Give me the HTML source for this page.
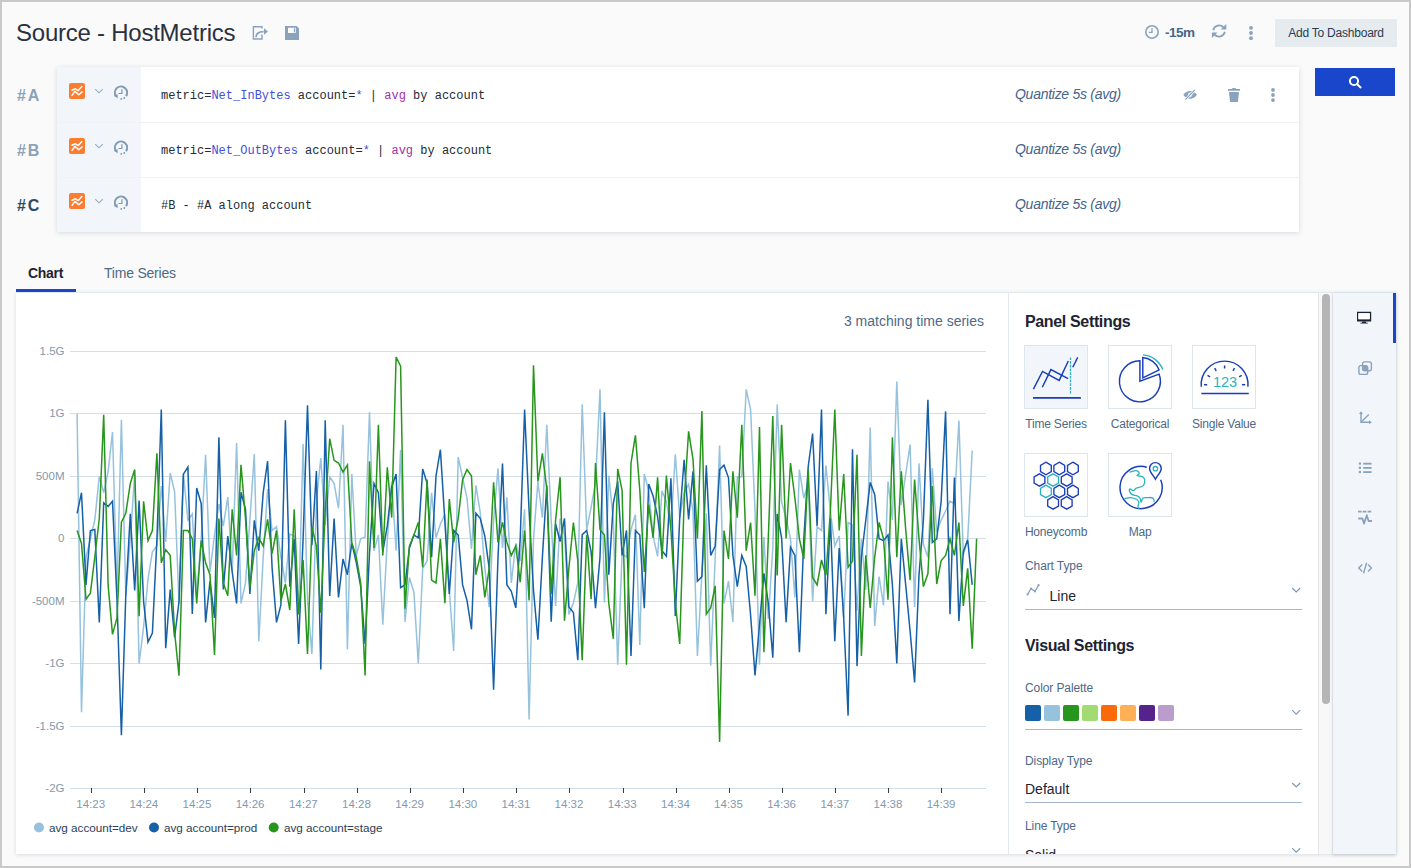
<!DOCTYPE html>
<html lang="en">
<head>
<meta charset="utf-8">
<title>Source - HostMetrics</title>
<style>
*{box-sizing:border-box;margin:0;padding:0}
html,body{width:1411px;height:868px;overflow:hidden;background:#fafafa;font-family:"Liberation Sans",sans-serif;color:#1d2a3a}
#frame{position:absolute;left:0;top:0;width:1411px;height:868px;border:2px solid #c9c9c9;border-right-width:2px;border-bottom-width:2px;pointer-events:none;z-index:50}
.abs{position:absolute}
#title{left:16px;top:18px;font-size:24px;line-height:30px;color:#2a3140;white-space:nowrap;letter-spacing:-0.24px}
.hicon{position:absolute}
#time{left:1165px;top:24.5px;font-size:13.5px;line-height:16px;font-weight:bold;color:#46678a;letter-spacing:-0.5px}
#addbtn{left:1275px;top:19px;width:122px;height:28px;background:#e6ebf0;color:#2a3b4f;font-size:12px;line-height:28px;text-align:center;white-space:nowrap;letter-spacing:-0.22px}
#searchbtn{left:1315px;top:68px;width:80px;height:28px;background:#1a46cb}
/* query panel */
#qpanel{left:57px;top:67px;width:1242px;height:165px;background:#fff;box-shadow:0 1px 5px rgba(40,60,90,.17)}
.qrow{position:absolute;left:0;width:1242px;height:55px}
.qsep{position:absolute;left:0;width:1242px;height:1px;background:#f0f3f6}
.qrow .gut{position:absolute;left:0;top:0;width:84px;height:55px;background:#f2f6fa}
.qrow .q{position:absolute;left:104px;top:20.5px;font-family:"Liberation Mono",monospace;font-size:12px;line-height:16px;color:#222b36;white-space:pre}
.q .m{color:#4250d8}.q .k{color:#a02fa8}
.qrow .qz{position:absolute;left:958px;top:18px;font-size:14px;line-height:18px;font-style:italic;color:#44648a;white-space:nowrap;letter-spacing:-0.27px}
.qlab{position:absolute;left:17px;font-size:16px;line-height:20px;font-weight:bold;color:#8ba2b8;letter-spacing:1.8px}
.oicon{position:absolute;left:12px;top:16px;width:16px;height:16px;background:#fc7c30;border-radius:2px}
/* tabs */
#tab1{left:28px;top:264px;font-size:14px;line-height:18px;font-weight:bold;color:#1d2433;letter-spacing:-0.3px}
#tab2{left:104px;top:264px;font-size:14px;line-height:18px;color:#4d6987;letter-spacing:-0.22px}
#tabline{left:16px;top:289px;width:60px;height:3px;background:#1a46cb}
#main{left:16px;top:292px;width:1380px;height:562px;background:#fff;border-top:1px solid #e3e9ef;box-shadow:0 1px 4px rgba(40,60,90,.16)}
#vdiv{left:1008px;top:293px;width:1px;height:561px;background:#e3e8ee}
#sbtrack{left:1318px;top:293px;width:15px;height:561px;background:#f8f8f8;border-left:1px solid #e4e6e8;border-right:1px solid #e9ebee}
#sbthumb{left:1322px;top:294px;width:8px;height:410px;background:#b5b5b5;border-radius:4px}
#side{left:1333px;top:293px;width:63px;height:561px;background:#f2f6fa;box-shadow:0 1px 3px rgba(40,60,90,.18)}
#sideact{left:1393px;top:293px;width:3px;height:50px;background:#1a46cb}
</style>
</head>
<body>
<div id="title" class="abs">Source - HostMetrics</div>
<div id="time" class="abs">-15m</div>
<div id="addbtn" class="abs">Add To Dashboard</div>
<div id="searchbtn" class="abs"></div>

<div class="qlab" style="top:85.8px">#A</div>
<div class="qlab" style="top:140.8px">#B</div>
<div class="qlab" style="top:195.8px;color:#2b4a68">#C</div>
<div id="qpanel" class="abs">
  <div class="qrow" style="top:0"><div class="gut"><div class="oicon"></div></div><div class="q">metric=<span class="m">Net_InBytes</span> account=<span class="m">*</span> | <span class="k">avg</span> by account</div><div class="qz">Quantize 5s (avg)</div></div>
  <div class="qrow" style="top:55px"><div class="gut"><div class="oicon"></div></div><div class="q">metric=<span class="m">Net_OutBytes</span> account=<span class="m">*</span> | <span class="k">avg</span> by account</div><div class="qz">Quantize 5s (avg)</div></div>
  <div class="qrow" style="top:110px"><div class="gut"><div class="oicon"></div></div><div class="q">#B - #A along account</div><div class="qz">Quantize 5s (avg)</div></div>
  <div class="qsep" style="top:55px"></div><div class="qsep" style="top:110px"></div>
</div>

<div id="tab1" class="abs">Chart</div>
<div id="tab2" class="abs">Time Series</div>
<div id="main" class="abs"></div>
<div id="tabline" class="abs"></div>
<div id="vdiv" class="abs"></div>
<div id="sbtrack" class="abs"></div>
<div id="sbthumb" class="abs"></div>
<div id="side" class="abs"></div>
<div id="sideact" class="abs"></div>

<!--CHART-->
<svg id="chart" class="abs" style="left:0;top:0" width="1411" height="868" viewBox="0 0 1411 868">
<g stroke="#d3dee6" stroke-width="1" shape-rendering="crispEdges">
<line x1="70" y1="351.5" x2="986" y2="351.5"/>
<line x1="70" y1="413.5" x2="986" y2="413.5"/>
<line x1="70" y1="476.5" x2="986" y2="476.5"/>
<line x1="70" y1="538.5" x2="986" y2="538.5"/>
<line x1="70" y1="601.5" x2="986" y2="601.5"/>
<line x1="70" y1="663.5" x2="986" y2="663.5"/>
<line x1="70" y1="726.5" x2="986" y2="726.5"/>
<line x1="70" y1="788.5" x2="986" y2="788.5"/>
</g>
<g stroke="#3a3a3a" stroke-width="1" shape-rendering="crispEdges">
<line x1="91.5" y1="788" x2="91.5" y2="793"/>
<line x1="144.5" y1="788" x2="144.5" y2="793"/>
<line x1="197.5" y1="788" x2="197.5" y2="793"/>
<line x1="250.5" y1="788" x2="250.5" y2="793"/>
<line x1="304.5" y1="788" x2="304.5" y2="793"/>
<line x1="357.5" y1="788" x2="357.5" y2="793"/>
<line x1="410.5" y1="788" x2="410.5" y2="793"/>
<line x1="463.5" y1="788" x2="463.5" y2="793"/>
<line x1="516.5" y1="788" x2="516.5" y2="793"/>
<line x1="569.5" y1="788" x2="569.5" y2="793"/>
<line x1="623.5" y1="788" x2="623.5" y2="793"/>
<line x1="676.5" y1="788" x2="676.5" y2="793"/>
<line x1="729.5" y1="788" x2="729.5" y2="793"/>
<line x1="782.5" y1="788" x2="782.5" y2="793"/>
<line x1="835.5" y1="788" x2="835.5" y2="793"/>
<line x1="888.5" y1="788" x2="888.5" y2="793"/>
<line x1="941.5" y1="788" x2="941.5" y2="793"/>
</g>
<g font-family="Liberation Sans, sans-serif" font-size="11.5" fill="#8499ae" text-anchor="end">
<text x="64.5" y="354.7">1.5G</text>
<text x="64.5" y="416.7">1G</text>
<text x="64.5" y="479.7">500M</text>
<text x="64.5" y="541.7">0</text>
<text x="64.5" y="604.7">-500M</text>
<text x="64.5" y="666.7">-1G</text>
<text x="64.5" y="729.7">-1.5G</text>
<text x="64.5" y="791.7">-2G</text>
</g>
<g font-family="Liberation Sans, sans-serif" font-size="11.5" fill="#8499ae" text-anchor="middle">
<text x="90.7" y="808">14:23</text>
<text x="143.8" y="808">14:24</text>
<text x="197.0" y="808">14:25</text>
<text x="250.1" y="808">14:26</text>
<text x="303.3" y="808">14:27</text>
<text x="356.4" y="808">14:28</text>
<text x="409.6" y="808">14:29</text>
<text x="462.8" y="808">14:30</text>
<text x="515.9" y="808">14:31</text>
<text x="569.0" y="808">14:32</text>
<text x="622.2" y="808">14:33</text>
<text x="675.4" y="808">14:34</text>
<text x="728.5" y="808">14:35</text>
<text x="781.6" y="808">14:36</text>
<text x="834.8" y="808">14:37</text>
<text x="888.0" y="808">14:38</text>
<text x="941.1" y="808">14:39</text>
</g>
<g fill="none" stroke-width="1.5" stroke-linejoin="miter">
<polyline stroke="#96c2dd" points="77.1,413.6 81.5,712.2 86.0,557.0 90.4,539.0 94.8,520.0 99.3,476.4 103.7,492.7 108.1,472.0 112.5,432.0 117.0,592.0 121.4,419.7 125.8,596.0 130.3,539.0 134.7,474.0 139.1,663.4 143.6,627.0 148.0,579.0 152.4,551.7 156.9,546.0 161.3,486.0 165.7,542.0 170.2,473.0 174.6,491.6 179.0,603.0 183.4,474.0 187.9,520.0 192.3,514.0 196.7,594.0 201.2,539.0 205.6,454.7 210.0,572.0 214.5,535.0 218.9,504.0 223.3,526.0 227.8,497.0 232.2,572.0 236.6,443.0 241.0,603.4 245.5,583.0 249.9,520.0 254.3,454.0 258.8,641.2 263.2,557.0 267.6,489.0 272.1,530.5 276.5,526.8 280.9,557.0 285.4,583.0 289.8,534.0 294.2,536.0 298.6,612.0 303.1,444.0 307.5,600.0 311.9,654.0 316.4,502.0 320.8,458.0 325.2,525.0 329.7,477.0 334.1,483.4 338.5,508.3 343.0,424.7 347.4,649.5 351.8,473.9 356.3,555.4 360.7,538.8 365.1,537.0 369.5,412.3 374.0,550.7 378.4,535.0 382.8,624.6 387.3,540.0 391.7,481.6 396.1,550.7 400.6,450.0 405.0,621.9 409.4,577.5 413.9,592.2 418.3,663.4 422.7,568.3 427.1,561.0 431.6,492.7 436.0,537.8 440.4,524.0 444.9,514.4 449.3,590.0 453.7,651.0 458.2,457.0 462.6,477.8 467.0,498.2 471.5,549.0 475.9,485.3 480.3,513.0 484.8,568.0 489.2,607.0 493.6,520.0 498.0,468.3 502.5,548.0 506.9,497.3 511.3,583.0 515.8,543.4 520.2,561.0 524.6,509.3 529.1,719.6 533.5,539.0 537.9,481.6 542.4,517.6 546.8,424.7 551.2,520.0 555.6,606.0 560.1,518.5 564.5,535.0 568.9,614.4 573.4,603.0 577.8,583.0 582.2,404.4 586.7,529.5 591.1,507.4 595.5,483.0 600.0,389.3 604.4,602.5 608.8,475.6 613.3,520.0 617.7,664.7 622.1,553.5 626.5,557.0 631.0,529.5 635.4,514.8 639.8,645.0 644.3,474.0 648.7,490.7 653.1,536.0 657.6,556.3 662.0,490.7 666.4,501.9 670.9,527.7 675.3,454.2 679.7,517.6 684.1,492.7 688.6,484.2 693.0,511.0 697.4,656.0 701.9,574.0 706.3,513.3 710.7,665.8 715.2,557.0 719.6,445.5 724.0,603.4 728.5,581.2 732.9,621.9 737.3,476.8 741.8,476.8 746.2,389.3 750.6,409.5 755.0,511.0 759.5,664.7 763.9,537.0 768.3,619.0 772.8,548.0 777.2,404.4 781.6,502.0 786.1,518.5 790.5,538.8 794.9,597.4 799.4,469.5 803.8,498.2 808.2,483.0 812.6,601.3 817.1,526.8 821.5,530.5 825.9,465.2 830.4,511.0 834.8,546.1 839.2,536.0 843.7,618.2 848.1,522.5 852.5,525.0 857.0,610.8 861.4,539.0 865.8,590.0 870.2,427.4 874.7,626.0 879.1,576.6 883.5,605.3 888.0,481.5 892.4,520.0 896.8,381.5 901.3,505.0 905.7,474.0 910.1,444.6 914.6,607.0 919.0,463.4 923.4,544.3 927.9,557.2 932.3,468.2 936.7,532.3 941.1,520.3 945.6,511.0 950.0,501.0 954.4,503.7 958.9,420.6 963.3,555.4 967.7,538.8 972.2,450.5"/>
<polyline stroke="#1560a6" points="77.1,513.3 81.5,492.7 86.0,585.0 90.4,530.5 94.8,529.5 99.3,622.4 103.7,502.8 108.1,506.5 112.5,501.3 117.0,600.0 121.4,735.3 125.8,595.0 130.3,513.9 134.7,590.5 139.1,500.5 143.6,601.5 148.0,642.0 152.4,633.0 156.9,540.0 161.3,409.5 165.7,648.2 170.2,589.6 174.6,637.5 179.0,601.6 183.4,474.2 187.9,467.0 192.3,614.0 196.7,488.0 201.2,503.7 205.6,622.4 210.0,581.2 214.5,618.0 218.9,437.2 223.3,589.5 227.8,536.0 232.2,572.0 236.6,603.4 241.0,492.3 245.5,509.3 249.9,594.0 254.3,520.3 258.8,550.7 263.2,492.7 267.6,461.2 272.1,568.0 276.5,622.4 280.9,605.0 285.4,420.2 289.8,586.7 294.2,539.0 298.6,644.0 303.1,539.0 307.5,405.3 311.9,545.2 316.4,471.0 320.8,669.5 325.2,420.2 329.7,596.0 334.1,518.5 338.5,597.4 343.0,559.0 347.4,574.7 351.8,543.4 356.3,562.7 360.7,586.7 365.1,644.0 369.5,553.5 374.0,483.4 378.4,492.7 382.8,551.7 387.3,525.9 391.7,487.0 396.1,474.0 400.6,587.6 405.0,584.9 409.4,548.0 413.9,535.0 418.3,537.8 422.7,469.0 427.1,483.4 431.6,557.2 436.0,476.0 440.4,449.7 444.9,522.0 449.3,594.0 453.7,530.5 458.2,535.0 462.6,584.9 467.0,600.5 471.5,629.3 475.9,513.3 480.3,518.5 484.8,536.0 489.2,568.3 493.6,689.7 498.0,557.2 502.5,463.6 506.9,584.9 511.3,591.3 515.8,607.9 520.2,538.8 524.6,409.5 529.1,511.0 533.5,590.4 537.9,639.8 542.4,557.0 546.8,485.3 551.2,621.7 555.6,524.0 560.1,541.5 564.5,518.5 568.9,607.0 573.4,612.5 577.8,660.2 582.2,534.7 586.7,530.5 591.1,551.7 595.5,608.3 600.0,557.2 604.4,412.3 608.8,574.7 613.3,503.7 617.7,481.5 622.1,555.4 626.5,530.5 631.0,656.0 635.4,530.5 639.8,535.0 644.3,608.3 648.7,484.0 653.1,496.0 657.6,516.6 662.0,550.7 666.4,556.3 670.9,478.2 675.3,616.1 679.7,518.5 684.1,459.7 688.6,519.4 693.0,471.4 697.4,581.2 701.9,576.6 706.3,465.2 710.7,555.4 715.2,546.1 719.6,469.5 724.0,465.2 728.5,477.8 732.9,555.4 737.3,586.7 741.8,555.4 746.2,566.4 750.6,615.0 755.0,675.4 759.5,625.0 763.9,573.4 768.3,603.0 772.8,657.8 777.2,513.9 781.6,537.8 786.1,622.3 790.5,547.1 794.9,555.4 799.4,652.3 803.8,539.0 808.2,466.7 812.6,433.5 817.1,525.9 821.5,409.5 825.9,614.2 830.4,518.5 834.8,641.2 839.2,548.0 843.7,618.0 848.1,715.6 852.5,449.2 857.0,666.1 861.4,557.0 865.8,520.0 870.2,482.4 874.7,494.4 879.1,538.8 883.5,540.6 888.0,535.0 892.4,585.0 896.8,663.4 901.3,538.8 905.7,585.0 910.1,631.0 914.6,682.4 919.0,575.0 923.4,520.0 927.9,399.8 932.3,542.4 936.7,538.8 941.1,502.0 945.6,411.4 950.0,614.2 954.4,477.4 958.9,620.9 963.3,551.7 967.7,539.7 972.2,584.9"/>
<polyline stroke="#27961c" points="77.1,530.5 81.5,543.4 86.0,599.2 90.4,593.2 94.8,557.0 99.3,518.5 103.7,414.7 108.1,584.9 112.5,634.4 117.0,618.0 121.4,522.2 125.8,513.3 130.3,483.4 134.7,469.6 139.1,616.3 143.6,501.3 148.0,540.6 152.4,530.5 156.9,453.4 161.3,562.7 165.7,549.8 170.2,555.4 174.6,632.0 179.0,675.7 183.4,530.5 187.9,530.5 192.3,538.8 196.7,603.4 201.2,540.6 205.6,562.7 210.0,574.7 214.5,655.0 218.9,518.5 223.3,583.0 227.8,595.7 232.2,509.3 236.6,555.4 241.0,464.9 245.5,518.5 249.9,587.6 254.3,550.7 258.8,537.8 263.2,546.1 267.6,519.4 272.1,553.5 276.5,530.5 280.9,600.7 285.4,584.0 289.8,610.0 294.2,509.3 298.6,614.5 303.1,560.0 307.5,654.0 311.9,526.8 316.4,546.1 320.8,612.7 325.2,511.0 329.7,438.7 334.1,460.3 338.5,463.0 343.0,472.2 347.4,464.9 351.8,542.4 356.3,557.2 360.7,583.0 365.1,675.4 369.5,461.2 374.0,548.0 378.4,424.7 382.8,555.4 387.3,467.3 391.7,517.6 396.1,357.0 400.6,366.2 405.0,608.8 409.4,546.1 413.9,535.0 418.3,522.5 422.7,567.3 427.1,479.6 431.6,580.2 436.0,583.0 440.4,538.8 444.9,603.3 449.3,499.1 453.7,542.4 458.2,518.5 462.6,479.6 467.0,469.5 471.5,476.0 475.9,574.7 480.3,555.4 484.8,597.4 489.2,568.3 493.6,482.4 498.0,542.4 502.5,522.5 506.9,542.4 511.3,555.4 515.8,546.1 520.2,582.1 524.6,530.5 529.1,600.5 533.5,365.3 537.9,481.5 542.4,453.4 546.8,489.0 551.2,594.0 555.6,520.0 560.1,477.2 564.5,620.8 568.9,568.0 573.4,522.5 577.8,560.9 582.2,660.2 586.7,535.0 591.1,599.2 595.5,463.0 600.0,529.5 604.4,535.0 608.8,603.4 613.3,638.8 617.7,468.9 622.1,490.4 626.5,664.7 631.0,463.0 635.4,435.4 639.8,490.0 644.3,572.0 648.7,504.6 653.1,537.8 657.6,477.2 662.0,559.0 666.4,475.5 670.9,529.5 675.3,602.0 679.7,644.0 684.1,502.0 688.6,431.3 693.0,459.3 697.4,538.4 701.9,411.0 706.3,614.2 710.7,608.0 715.2,585.8 719.6,742.1 724.0,530.5 728.5,559.0 732.9,471.4 737.3,517.6 741.8,424.7 746.2,550.7 750.6,522.5 755.0,595.8 759.5,427.0 763.9,652.3 768.3,538.0 772.8,416.0 777.2,575.6 781.6,424.7 786.1,538.4 790.5,463.0 794.9,498.0 799.4,538.8 803.8,559.0 808.2,469.5 812.6,577.5 817.1,584.9 821.5,560.0 825.9,575.3 830.4,511.0 834.8,409.5 839.2,530.5 843.7,474.0 848.1,567.3 852.5,560.9 857.0,454.7 861.4,656.0 865.8,555.4 870.2,608.0 874.7,557.0 879.1,522.5 883.5,538.8 888.0,599.7 892.4,437.2 896.8,557.2 901.3,471.3 905.7,529.5 910.1,580.2 914.6,479.6 919.0,538.8 923.4,586.6 927.9,573.8 932.3,486.0 936.7,584.0 941.1,560.9 945.6,555.4 950.0,538.8 954.4,555.4 958.9,522.5 963.3,605.9 967.7,568.3 972.2,648.6 976.6,538.8"/>
</g>
<circle cx="39" cy="827.5" r="5" fill="#96c2dd"/><circle cx="154" cy="827.5" r="5" fill="#1560a6"/><circle cx="273.7" cy="827.5" r="5" fill="#27961c"/>
<g font-family="Liberation Sans, sans-serif" font-size="11.7" fill="#2c3e55">
<text x="49" y="831.5">avg account=dev</text><text x="164" y="831.5">avg account=prod</text><text x="284" y="831.5">avg account=stage</text>
</g>
<text x="984" y="326" text-anchor="end" font-family="Liberation Sans, sans-serif" font-size="14" fill="#4d6987">3 matching time series</text>
</svg>
<!--/CHART-->
<!--ICONS-->
<svg id="icons" class="abs" style="left:0;top:0" width="1411" height="868" viewBox="0 0 1411 868">
<g fill="none" stroke="#8aa2bc" stroke-width="1.4">
<path d="M262 28.6V26.8H253.4V39H262V34.4"/>
<path d="M256 37.2C256 33.4 258.6 31.6 263.6 31.6" stroke-width="1.8"/>
</g>
<path d="M264 28.2L268 31.5L264 34.8Z" fill="#8aa2bc"/>
<path d="M285 26.1H296.6L299 28.5V40H285Z M288 27.8V33H295.8V27.8Z" fill="#8aa2bc" fill-rule="evenodd"/>
<rect x="293.9" y="28.4" width="1.1" height="4" fill="#8aa2bc"/>
<g fill="none" stroke="#8aa2bc" stroke-width="1.6"><circle cx="1152" cy="32" r="6.2"/><path d="M1152 28V32.4H1148.8" stroke-width="1.3"/></g>
<g fill="none" stroke="#8aa2bc" stroke-width="1.8">
<path d="M1213.3 30.2A6 6 0 0 1 1223.6 27.4"/>
<path d="M1224.9 31.8A6 6 0 0 1 1214.6 34.6"/>
</g>
<path d="M1226.3 24V29.6H1220.7Z" fill="#8aa2bc"/><path d="M1211.9 38V32.4H1217.5Z" fill="#8aa2bc"/>
<circle cx="1251" cy="27.8" r="1.9" fill="#8aa2bc"/>
<circle cx="1251" cy="33" r="1.9" fill="#8aa2bc"/>
<circle cx="1251" cy="38.2" r="1.9" fill="#8aa2bc"/>
<g fill="none" stroke="#fff" stroke-width="2" stroke-linecap="round"><circle cx="1354" cy="81" r="4.1"/><path d="M1357.2 84.2L1360.6 87.4"/></g>
<path d="M1183.3 94.8C1186.5 89.6 1193.7 89.6 1196.9 94.8C1193.7 100 1186.5 100 1183.3 94.8Z" fill="#8aa2bc"/>
<circle cx="1190.1" cy="94.8" r="2.3" fill="#fff" opacity=".75"/>
<circle cx="1190.1" cy="94.8" r="1.1" fill="#8aa2bc"/>
<path d="M1185 100.2L1194.2 90.6" stroke="#fff" stroke-width="2.6" fill="none"/>
<path d="M1185.4 99.6L1194.7 90" stroke="#8aa2bc" stroke-width="1.1" fill="none"/>
<path d="M1228 89.1H1232.3V88H1235.8V89.1H1240V90.8H1228Z M1228.9 92.1H1239L1237.9 101.9H1230.1Z" fill="#8aa2bc"/>
<circle cx="1273" cy="89.9" r="1.9" fill="#8aa2bc"/>
<circle cx="1273" cy="95" r="1.9" fill="#8aa2bc"/>
<circle cx="1273" cy="100.1" r="1.9" fill="#8aa2bc"/>
<g transform="translate(69,83)" fill="none" stroke="#fff" stroke-width="1.5" stroke-linejoin="round" stroke-linecap="round">
<path d="M2.9 7.3L6.4 5.8L9.2 7.6L12.9 3.6"/><path d="M3 12.4L5.9 8.4L9.8 11.8L13.1 8.9"/>
</g>
<path d="M95.2 89.2L99 92.8L102.8 89.2" fill="none" stroke="#95aabf" stroke-width="1.15"/>
<path d="M126.00 96.10A6.1 6.1 0 1 0 115.72 95.65" fill="none" stroke="#8099b3" stroke-width="2"/>
<path d="M113.7 95.8L117.7 98.2L117.6 94.2Z" fill="#8099b3"/>
<path d="M121.9 89.2V93.5H118.4" fill="none" stroke="#8099b3" stroke-width="1.2"/>
<circle cx="121.3" cy="98.9" r="0.9" fill="#8099b3"/><circle cx="124.3" cy="98.0" r="0.9" fill="#8099b3"/>
<g transform="translate(69,138)" fill="none" stroke="#fff" stroke-width="1.5" stroke-linejoin="round" stroke-linecap="round">
<path d="M2.9 7.3L6.4 5.8L9.2 7.6L12.9 3.6"/><path d="M3 12.4L5.9 8.4L9.8 11.8L13.1 8.9"/>
</g>
<path d="M95.2 144.2L99 147.8L102.8 144.2" fill="none" stroke="#95aabf" stroke-width="1.15"/>
<path d="M126.00 151.10A6.1 6.1 0 1 0 115.72 150.65" fill="none" stroke="#8099b3" stroke-width="2"/>
<path d="M113.7 150.8L117.7 153.2L117.6 149.2Z" fill="#8099b3"/>
<path d="M121.9 144.2V148.5H118.4" fill="none" stroke="#8099b3" stroke-width="1.2"/>
<circle cx="121.3" cy="153.9" r="0.9" fill="#8099b3"/><circle cx="124.3" cy="153.0" r="0.9" fill="#8099b3"/>
<g transform="translate(69,193)" fill="none" stroke="#fff" stroke-width="1.5" stroke-linejoin="round" stroke-linecap="round">
<path d="M2.9 7.3L6.4 5.8L9.2 7.6L12.9 3.6"/><path d="M3 12.4L5.9 8.4L9.8 11.8L13.1 8.9"/>
</g>
<path d="M95.2 199.2L99 202.8L102.8 199.2" fill="none" stroke="#95aabf" stroke-width="1.15"/>
<path d="M126.00 206.10A6.1 6.1 0 1 0 115.72 205.65" fill="none" stroke="#8099b3" stroke-width="2"/>
<path d="M113.7 205.8L117.7 208.2L117.6 204.2Z" fill="#8099b3"/>
<path d="M121.9 199.2V203.5H118.4" fill="none" stroke="#8099b3" stroke-width="1.2"/>
<circle cx="121.3" cy="208.9" r="0.9" fill="#8099b3"/><circle cx="124.3" cy="208.0" r="0.9" fill="#8099b3"/>
<path d="M1357 311.8H1371.2V321.6H1357Z M1358.4 313.2V319.2H1369.8V313.2Z" fill="#1d2433" fill-rule="evenodd"/>
<rect x="1358.4" y="313.2" width="11.4" height="6" fill="#fff"/>
<path d="M1362.4 321.6H1365.8L1366.2 322.7H1367.8V323.6H1360.4V322.7H1362Z" fill="#1d2433"/>
<g fill="none" stroke="#8aa2bc" stroke-width="1.4"><rect x="1362.6" y="361.9" width="8.8" height="8.8" rx="2"/><rect x="1358.9" y="365.6" width="8.8" height="8.8" rx="2"/></g>
<rect x="1363" y="366" width="4.4" height="4.4" fill="#8aa2bc"/>
<g fill="none" stroke="#8aa2bc" stroke-width="1.4"><path d="M1361 413V422.2H1370"/><path d="M1361 422.2L1368.8 414.6"/></g>
<path d="M1359 414L1361 411.2L1363 414Z" fill="#8aa2bc"/><path d="M1369 420.2L1371.8 422.2L1369 424.2Z" fill="#8aa2bc"/>
<rect x="1363.2" y="462.8" width="8.4" height="1.8" fill="#8aa2bc"/><rect x="1358.8" y="462.5" width="2.2" height="2.2" fill="#8aa2bc"/>
<rect x="1363.2" y="467.0" width="8.4" height="1.8" fill="#8aa2bc"/><rect x="1358.8" y="466.7" width="2.2" height="2.2" fill="#8aa2bc"/>
<rect x="1363.2" y="471.2" width="8.4" height="1.8" fill="#8aa2bc"/><rect x="1358.8" y="470.9" width="2.2" height="2.2" fill="#8aa2bc"/>
<path d="M1358 511.6H1372" stroke="#8aa2bc" stroke-width="1.7" stroke-dasharray="3.6 1.2" fill="none"/>
<path d="M1358.2 518.5H1362.4L1364 523.6L1366.8 515.2L1368.6 521H1372" stroke="#8aa2bc" stroke-width="1.8" fill="none" stroke-linejoin="round"/>
<g fill="none" stroke="#8aa2bc" stroke-width="1.4"><path d="M1362.2 564.6L1358.8 568L1362.2 571.4"/><path d="M1368 564.6L1371.4 568L1368 571.4"/><path d="M1366.6 562.8L1363.6 573.2"/></g>
</svg>
<!--/ICONS-->
<!--SETTINGS-->
<style>
.sh{position:absolute;left:1025px;font-size:16px;line-height:20px;font-weight:bold;color:#1d2433;white-space:nowrap;letter-spacing:-0.35px}
.sl{position:absolute;left:1025px;font-size:12px;line-height:14px;color:#4d6987;white-space:nowrap;letter-spacing:-0.1px}
.sv{position:absolute;left:1025px;font-size:14px;line-height:18px;color:#1d2433;white-space:nowrap}
.ul{position:absolute;left:1025px;width:277px;height:1px;background:#a3b8d0}
.tile{position:absolute;width:64px;height:64px;border:1px solid #dde5ed;background:#fff}
.tl{position:absolute;width:104px;text-align:center;font-size:12px;line-height:14px;color:#4d6987;white-space:nowrap;letter-spacing:-0.2px}
.sw{position:absolute;top:705px;width:16px;height:16px;border-radius:2px}
</style>
<div class="sh" style="top:312px">Panel Settings</div>
<div class="tile" style="left:1024px;top:345px;background:#f2f6fa"></div>
<div class="tl" style="left:1004px;top:417px">Time Series</div>
<div class="tile" style="left:1108px;top:345px"></div>
<div class="tl" style="left:1088px;top:417px">Categorical</div>
<div class="tile" style="left:1192px;top:345px"></div>
<div class="tl" style="left:1172px;top:417px">Single Value</div>
<div class="tile" style="left:1024px;top:453px"></div>
<div class="tl" style="left:1004px;top:525px">Honeycomb</div>
<div class="tile" style="left:1108px;top:453px"></div>
<div class="tl" style="left:1088px;top:525px">Map</div>
<div class="sl" style="top:559px">Chart Type</div>
<div class="sv" style="top:587px;left:1049.5px">Line</div>
<div class="ul" style="top:609px"></div>
<div class="sh" style="top:636px">Visual Settings</div>
<div class="sl" style="top:681px">Color Palette</div>
<div class="sw" style="left:1025px;background:#1560a6"></div>
<div class="sw" style="left:1044px;background:#96c2dd"></div>
<div class="sw" style="left:1063px;background:#27961c"></div>
<div class="sw" style="left:1082px;background:#a2db72"></div>
<div class="sw" style="left:1101px;background:#fb690a"></div>
<div class="sw" style="left:1120px;background:#feb056"></div>
<div class="sw" style="left:1139px;background:#56228b"></div>
<div class="sw" style="left:1158px;background:#ba9dcc"></div>
<div class="ul" style="top:729px"></div>
<div class="sl" style="top:754px">Display Type</div>
<div class="sv" style="top:780px">Default</div>
<div class="ul" style="top:802px"></div>
<div class="sl" style="top:819px">Line Type</div>
<div class="abs" style="left:1025px;top:845px;width:200px;height:9px;overflow:hidden"><div class="sv" style="left:0;top:0.5px">Solid</div></div>
<svg class="abs" style="left:0;top:0" width="1411" height="868" viewBox="0 0 1411 868">
<path d="M1292.2 588L1296.2 592L1300.2 588" fill="none" stroke="#7f97b0" stroke-width="1.1"/>
<path d="M1292.2 710.2L1296.2 714.2L1300.2 710.2" fill="none" stroke="#7f97b0" stroke-width="1.1"/>
<path d="M1292.2 783L1296.2 787L1300.2 783" fill="none" stroke="#7f97b0" stroke-width="1.1"/>
<path d="M1292.2 848.2L1296.2 852.2L1300.2 848.2" fill="none" stroke="#7f97b0" stroke-width="1.1"/>
<g fill="none" stroke="#8aa2bc" stroke-width="1.3"><path d="M1027.6 594.4L1031 588.6L1035 591.4L1038.6 585.2"/></g>
<circle cx="1027.6" cy="594.4" r="1.1" fill="#8aa2bc"/>
<circle cx="1031" cy="588.6" r="1.1" fill="#8aa2bc"/>
<circle cx="1035" cy="591.4" r="1.1" fill="#8aa2bc"/>
<circle cx="1038.6" cy="585.2" r="1.1" fill="#8aa2bc"/>
<g transform="translate(1024,345)" fill="none" stroke="#1a3dbb" stroke-width="1.45">
<path d="M9.4 44.2L18.5 26.4L35.2 35.4L44.3 16"/>
<path d="M18.3 42.2L26.9 24.6L44.1 33.7"/><path d="M48.8 22.2L53.7 12.4"/>
<path d="M9 52.9H56.9" stroke-width="1.9"/>
<path d="M46.5 12.4V48.6" stroke="#2bb3c0" stroke-dasharray="2.7 1" stroke-width="1.3"/>
</g>
<g transform="translate(1108,345)" fill="none" stroke="#1a3dbb" stroke-width="1.45">
<path d="M31.9 15.8V36.3L51.1 29.1A20.5 20.5 0 1 1 31.9 15.8Z"/>
<path d="M34.8 12.5V32.8L51.1 25.0A19.4 19.4 0 0 0 34.8 12.5Z"/>
<path d="M35.0 9.9A22.6 22.6 0 0 1 54.8 24.6" stroke="#2bb3c0"/>
</g>
<g transform="translate(1192,345)" fill="none" stroke="#1a3dbb" stroke-width="1.45">
<path d="M9.3 41.7A23.4 23.4 0 1 1 55.9 41.7"/><path d="M9.3 48.5H56.8" stroke-width="1.7"/>
<path d="M15.2 39.7L12.0 39.7" stroke-width="1.5"/>
<path d="M18.1 31.9L15.5 30.4" stroke-width="1.5"/>
<path d="M24.2 25.8L22.7 23.2" stroke-width="1.5"/>
<path d="M32.6 23.5L32.6 20.5" stroke-width="1.5"/>
<path d="M41.0 25.8L42.5 23.2" stroke-width="1.5"/>
<path d="M47.1 31.9L49.7 30.4" stroke-width="1.5"/>
<path d="M50.0 39.7L53.2 39.7" stroke-width="1.5"/>
</g>
<text x="1225.1" y="386.5" text-anchor="middle" font-family="Liberation Sans, sans-serif" font-size="14.5" fill="#2bb3c0">123</text>
<g transform="translate(1024,453)" fill="none" stroke="#1a3dbb" stroke-width="1.35">
<polygon points="21.9,9.2 27.3,12.4 27.3,18.6 21.9,21.8 16.5,18.6 16.5,12.4"/>
<polygon points="35.3,9.2 40.7,12.4 40.7,18.6 35.3,21.8 29.9,18.6 29.9,12.4"/>
<polygon points="48.9,9.2 54.3,12.4 54.3,18.6 48.9,21.8 43.5,18.6 43.5,12.4"/>
<polygon points="15.5,20.8 20.9,23.9 20.9,30.1 15.5,33.2 10.1,30.1 10.1,23.9"/>
<polygon points="29.1,20.8 34.5,23.9 34.5,30.1 29.1,33.2 23.7,30.1 23.7,23.9" stroke="#2bb3c0"/>
<polygon points="42.7,20.8 48.1,23.9 48.1,30.1 42.7,33.2 37.3,30.1 37.3,23.9"/>
<polygon points="21.9,32.1 27.3,35.3 27.3,41.5 21.9,44.6 16.5,41.5 16.5,35.3" stroke="#2bb3c0"/>
<polygon points="35.3,32.1 40.7,35.3 40.7,41.5 35.3,44.6 29.9,41.5 29.9,35.3"/>
<polygon points="48.9,32.1 54.3,35.3 54.3,41.5 48.9,44.6 43.5,41.5 43.5,35.3"/>
<polygon points="29.1,43.6 34.5,46.8 34.5,53.0 29.1,56.1 23.7,53.0 23.7,46.8"/>
<polygon points="42.7,43.6 48.1,46.8 48.1,53.0 42.7,56.1 37.3,53.0 37.3,46.8"/>
</g>
<g transform="translate(1108,453)" fill="none" stroke="#1a3dbb" stroke-width="1.45">
<path d="M52.7 26.7A21.1 21.1 0 1 1 38.8 14.2"/>
<path d="M47.4 26.2C45.4 22.4 41.6 19.2 41.6 15.4A5.8 5.8 0 0 1 53.2 15.4C53.2 19.2 49.4 22.4 47.4 26.2Z"/>
<circle cx="47.4" cy="15.7" r="2.2" stroke="#2bb3c0" stroke-width="1.3"/>
<g stroke="#2bb3c0" stroke-width="1.3" stroke-linejoin="round" transform="translate(0.6,0.4)">
<path d="M20.9 18.6C23.4 18.4 26 16.4 28.5 17.4C30.6 18.2 31 20.2 30.2 20.9C29.6 21.6 28.4 21.6 28.5 22.1C30 23 32 22.4 33.7 23.2C35 23.8 35.8 25 36 26.2C36.4 28.2 36 30.4 34.9 32C33 34 29.6 33.6 27.3 34.9C26.2 35.6 26 36.8 25 37.2C23.6 37.6 22.6 35.4 21.5 35.4C20.6 35.6 20.6 36.8 20.9 37.8C21.4 39.4 22.4 40.6 23.8 41.3C25.2 42 27 41.8 28.5 42.4C29.8 42.8 30.8 43.6 31.4 44.7C32 46 31.8 47.6 32.5 48.8C33.4 47.6 33.2 45.6 34.3 44.7C35.8 43.6 38.2 44.4 40.1 44.2C41.6 44 43 44 44.2 44.7C45.4 45.6 45.2 47.2 45.9 48.2"/>
<path d="M15.7 45.3C17.8 44.8 20 44 22.1 44.2C24.2 44.4 26.2 44.8 27.9 45.9C29 46.6 29.8 47.6 30.2 48.8C30.6 50.4 29 52 29.4 53.5C29.6 54.2 30.2 54.8 30.8 55.2"/>
</g></g>
</svg>
<!--/SETTINGS-->
<div id="frame"></div>
</body>
</html>
